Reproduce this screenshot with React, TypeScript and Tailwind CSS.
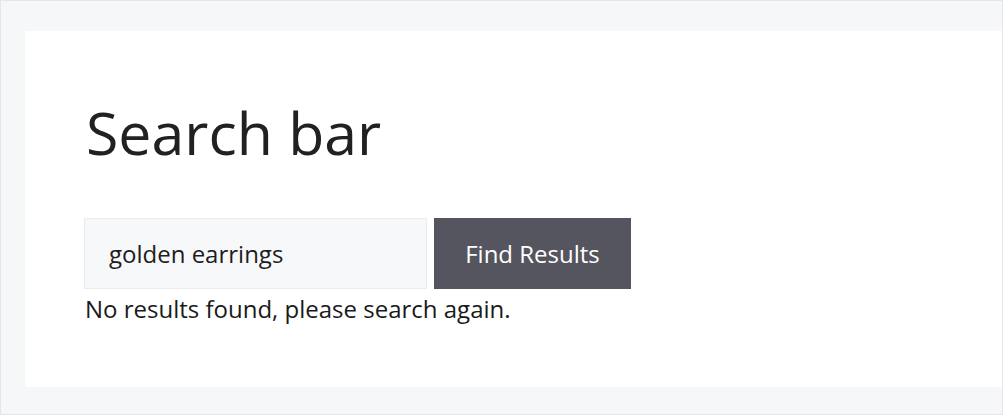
export default function App() {
  return (
    <div
      className="h-[415px] w-full overflow-hidden border border-[#e4e6ea] bg-[#f6f7f9] pl-[24px] pt-[30px] pb-[28px]"
      style={{ fontFamily: '"Open Sans", "Noto Sans", sans-serif' }}
    >
      <div className="h-[356px] bg-white pl-[59px] pt-[65px]">
        <h1 className="ml-[2px] text-[59px] leading-[72px] font-normal text-[#212121]">Search bar</h1>
        <div className="mt-[50px] flex gap-[7px]">
          <div className="flex h-[71px] w-[343px] items-center border border-[#ebebeb] bg-[#f7f8f9] pl-[24px] text-[24px] text-[#1d1d1d]">
            golden earrings
          </div>
          <button className="h-[71px] w-[197px] bg-[#55555f] text-[24px] text-white">Find Results</button>
        </div>
        <p className="ml-[1px] mt-[4px] text-[24px] leading-[32px] text-[#1a1a1a]">No results found, please search again.</p>
      </div>
    </div>
  );
}
